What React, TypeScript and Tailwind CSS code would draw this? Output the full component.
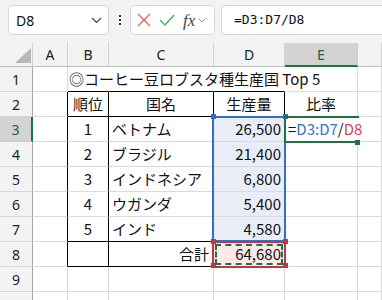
import type { ReactNode } from 'react';

const cellFont = "font-['Noto_Sans_CJK_JP',sans-serif]";

function Cell({ className = '', children }: { className?: string; children?: ReactNode }) {
  return (
    <div
      className={`border-r border-b border-[#dadada] flex items-center whitespace-nowrap text-[15px] text-[#111] ${className}`}
    >
      {children}
    </div>
  );
}

function RowHead({ n, active = false }: { n?: number; active?: boolean }) {
  return (
    <div
      className={
        active
          ? "flex items-center justify-center border-b border-[#c8c8c8] border-r-2 border-r-[#1e7145] bg-[#d3d3d3] text-[14px] text-[#1e5c3a] font-['Noto_Sans',sans-serif]"
          : "flex items-center justify-center border-b border-[#d6d6d6] border-r border-r-[#a8a8a8] bg-[#f3f3f3] text-[14px] text-[#222] font-['Noto_Sans',sans-serif]"
      }
    >
      {n}
    </div>
  );
}

function ColHead({ label, active = false }: { label?: string; active?: boolean }) {
  return (
    <div
      className={
        active
          ? "flex items-center justify-center border-r border-[#cfcfcf] border-b-2 border-b-[#1e7145] bg-[#d3d3d3] text-[14px] text-[#1e5c3a] font-['Noto_Sans',sans-serif]"
          : "flex items-center justify-center border-r border-[#d0d0d0] border-b border-b-[#bdbdbd] bg-[#f3f3f3] text-[14px] text-[#222] font-['Noto_Sans',sans-serif]"
      }
    >
      {label}
    </div>
  );
}

const data = [
  { rank: 1, name: 'ベトナム', amount: '26,500' },
  { rank: 2, name: 'ブラジル', amount: '21,400' },
  { rank: 3, name: 'インドネシア', amount: '6,800' },
  { rank: 4, name: 'ウガンダ', amount: '5,400' },
  { rank: 5, name: 'インド', amount: '4,580' },
];

export default function App() {
  return (
    <div className="w-[382px] h-[300px] overflow-hidden bg-white">
      {/* Formula bar */}
      <div className="h-[43px] bg-[#f3f3f3] flex items-start pt-[5px] pl-[8px]">
        <div className="w-[101px] h-[30px] bg-white border border-[#d6d6d6] rounded-[5px] flex items-center justify-between pl-[7px] pr-[6px]">
          <span className="text-[14px] text-[#111] font-['Noto_Sans',sans-serif]">D8</span>
          <svg width="11" height="7" viewBox="0 0 11 7">
            <polyline points="1,1 5.5,5.5 10,1" fill="none" stroke="#444" strokeWidth="1.2" />
          </svg>
        </div>
        <div className="w-[21px] h-[30px] flex flex-col items-center justify-center gap-[2px]">
          <span className="w-[2px] h-[2px] bg-[#333]" />
          <span className="w-[2px] h-[2px] bg-[#333]" />
          <span className="w-[2px] h-[2px] bg-[#333]" />
        </div>
        <div className="w-[85px] h-[30px] bg-white border border-[#d6d6d6] rounded-[5px] flex items-center pl-[6px] gap-[8px]">
          <svg width="14" height="14" viewBox="0 0 14 14">
            <path d="M1 1 L13 13 M13 1 L1 13" stroke="#e25c5c" strokeWidth="1.3" fill="none" />
          </svg>
          <svg width="16" height="12" viewBox="0 0 16 12">
            <polyline points="1,6 6,11 15,1" fill="none" stroke="#4ea463" strokeWidth="1.3" />
          </svg>
          <div className="flex items-center gap-[3px]">
            <span className="text-[17px] italic text-[#444] font-['Liberation_Serif',serif] leading-none">fx</span>
            <svg width="8" height="5" viewBox="0 0 8 5">
              <polyline points="0.5,0.5 4,4 7.5,0.5" fill="none" stroke="#999" strokeWidth="1" />
            </svg>
          </div>
        </div>
        <div className="flex-1 -mr-[10px] ml-[6px] h-[30px] bg-white border border-[#d6d6d6] rounded-[5px] flex items-center pl-[12px]">
          <span className="text-[13px] text-[#111] font-['DejaVu_Sans_Mono',monospace]">=D3:D7/D8</span>
        </div>
      </div>

      {/* Sheet */}
      <div className={`relative grid grid-cols-[33px_35px_41px_105px_71px_73px_24px] grid-rows-[24px_repeat(10,25px)] ${cellFont}`}>
        {/* header row */}
        <div className="relative bg-[#f3f3f3] border-r border-[#d0d0d0] border-b border-b-[#bdbdbd]">
          <svg className="absolute left-[15px] top-[5px]" width="16" height="15" viewBox="0 0 16 15">
            <polygon points="16,0 16,15 0,15" fill="#b7b7b7" />
          </svg>
        </div>
        <ColHead label="A" />
        <ColHead label="B" />
        <ColHead label="C" />
        <ColHead label="D" />
        <ColHead label="E" active />
        <ColHead />

        {/* row 1 */}
        <RowHead n={1} />
        <Cell />
        <Cell className="border-r-transparent border-b-black pl-[1px]">
          ◎コーヒー豆ロブスタ種生産国 Top 5
        </Cell>
        <Cell className="border-r-transparent border-b-black" />
        <Cell className="border-r-transparent border-b-black" />
        <Cell />
        <Cell />

        {/* row 2 */}
        <RowHead n={2} />
        <Cell className="border-r-black" />
        <Cell className="border-r-black border-b-black justify-center">順位</Cell>
        <Cell className="border-r-black border-b-black justify-center">国名</Cell>
        <Cell className="border-r-black border-b-black justify-center">生産量</Cell>
        <Cell className="justify-center">比率</Cell>
        <Cell />

        {/* rows 3-7 */}
        {data.map((row, i) => {
          const last = i === data.length - 1;
          return [
            <RowHead key={`h${i}`} n={i + 3} active={i === 0} />,
            <Cell key={`a${i}`} className="border-r-black" />,
            <Cell key={`b${i}`} className={last ? 'border-r-black border-b-black justify-center' : 'border-r-black justify-center'}>
              {row.rank}
            </Cell>,
            <Cell key={`c${i}`} className={last ? 'border-r-black border-b-black pl-[3px]' : 'border-r-black pl-[3px]'}>
              {row.name}
            </Cell>,
            <Cell key={`d${i}`} className={last ? 'border-r-black border-b-black justify-end pr-[3px] bg-[#e8edf8]' : 'border-r-black justify-end pr-[3px] bg-[#e8edf8]'}>
              {row.amount}
            </Cell>,
            i === 0 ? (
              <Cell key={`e${i}`} className="border-r-transparent pl-[3px] overflow-visible">
                <span>=</span>
                <span className="text-[#3c6fc6]">D3:D7</span>
                <span>/</span>
                <span className="text-[#c9475f]">D8</span>
              </Cell>
            ) : (
              <Cell key={`e${i}`} />
            ),
            <Cell key={`f${i}`} />,
          ];
        })}

        {/* row 8 */}
        <RowHead n={8} />
        <Cell className="border-r-black" />
        <Cell className="border-r-black border-b-black" />
        <Cell className="border-r-black border-b-black justify-end pr-[4px]">合計</Cell>
        <Cell className="border-r-black border-b-black justify-end pr-[3px] bg-[#fbe9e9]">64,680</Cell>
        <Cell />
        <Cell />

        {/* rows 9-10 (row 10 only peeks in at the bottom) */}
        {[9, 10].map((n) => [
          <RowHead key={`h${n}`} n={n === 9 ? 9 : undefined} />,
          <Cell key={`a${n}`} />,
          <Cell key={`b${n}`} />,
          <Cell key={`c${n}`} />,
          <Cell key={`d${n}`} />,
          <Cell key={`e${n}`} />,
          <Cell key={`f${n}`} />,
        ])}

        {/* reference range D3:D7 */}
        <div className="absolute left-[212px] top-[73px] w-[74px] h-[126px] border-2 border-[#3a6cc6]" />
        <div className="absolute left-[211px] top-[71px] w-[5px] h-[5px] bg-[#3a6cc6]" />
        <div className="absolute left-[283px] top-[71px] w-[5px] h-[5px] bg-[#3a6cc6]" />

        {/* reference range D8 */}
        <div className="absolute left-[212px] top-[198px] w-[74px] h-[27px] border-2 border-[#c4363f] p-[1px]">
          <div className="w-full h-full border-2 border-dashed border-[#1e7145]" />
        </div>
        <div className="absolute left-[211px] top-[196px] w-[5px] h-[5px] bg-[#c4363f]" />
        <div className="absolute left-[283px] top-[196px] w-[5px] h-[5px] bg-[#c4363f]" />
        <div className="absolute left-[211px] top-[220px] w-[5px] h-[5px] bg-[#c4363f]" />
        <div className="absolute left-[283px] top-[220px] w-[5px] h-[5px] bg-[#c4363f]" />

        {/* active cell E3 */}
        <div className="absolute left-[284px] top-[73px] w-[75px] h-[27px] border-l-2 border-t-2 border-b-2 border-[#1e7145]" />
        <div className="absolute left-[355px] top-[97px] w-[5px] h-[5px] bg-[#1e7145]" />
      </div>
    </div>
  );
}
